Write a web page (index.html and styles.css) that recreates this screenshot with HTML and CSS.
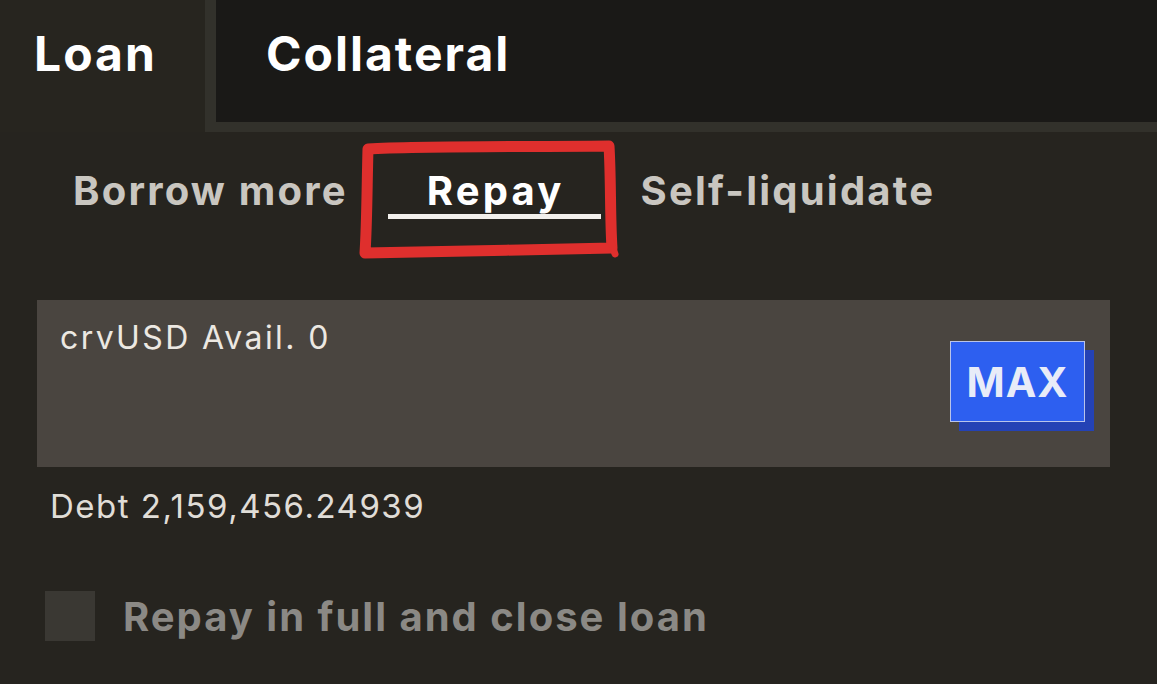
FILE: index.html
```html
<!DOCTYPE html>
<html lang="en">
<head>
<meta charset="utf-8">
<title>Loan – Repay</title>
<link rel="stylesheet" href="styles.css">
</head>
<body>
<div class="panel">
  <div class="tabs">
    <div class="tab tab-active">Loan</div>
    <div class="tab tab-idle">Collateral</div>
  </div>

  <div class="subtabs">
    <div class="subtab">Borrow more</div>
    <div class="subtab subtab-active">Repay</div>
    <div class="subtab">Self-liquidate</div>
    <svg class="annot" width="270" height="124" viewBox="0 0 270 124" aria-hidden="true">
      <path d="M9 11 C 60 8, 150 9, 250 8 C 252 40, 251 80, 253 110 C 170 112, 90 113, 6 115 C 8 85, 8 45, 9 11 Z" fill="none" stroke="#df2f2d" stroke-width="11" stroke-linejoin="round" stroke-linecap="round"/>
      <path d="M252 104 L 256 116" stroke="#df2f2d" stroke-width="7" stroke-linecap="round"/>
    </svg>
  </div>

  <div class="field">
    <div class="field-label">crvUSD Avail. 0</div>
    <button class="max">MAX</button>
  </div>

  <div class="debt">Debt 2,159,456.24939</div>

  <label class="check-row">
    <span class="checkbox"></span>
    <span class="check-label">Repay in full and close loan</span>
  </label>
</div>
</body>
</html>
```

FILE: styles.css
```css
html, body {
  margin: 0;
  padding: 0;
  background: #26241f;
  width: 1157px;
  height: 684px;
  overflow: hidden;
  font-family: Inter, "Liberation Sans", sans-serif;
}

.panel {
  display: flex;
  flex-direction: column;
  width: 1157px;
  height: 684px;
  background: #26241f;
}

.tabs {
  display: flex;
  height: 132px;
}

.tab {
  font-size: 48px;
  font-weight: 700;
  color: #ffffff;
  letter-spacing: 2px;
  box-sizing: border-box;
  padding-top: 24px;
}

.tab-active {
  width: 205px;
  padding-left: 34px;
  background: #27251f;
}

.tab-idle {
  flex: 1;
  background: #1a1917;
  border-left: 11px solid #32312b;
  border-bottom: 10px solid #32312b;
  padding-left: 50px;
}

.subtabs {
  position: relative;
  display: flex;
  align-items: flex-start;
  gap: 40px;
  padding-left: 73px;
  margin-top: 36px;
  height: 132px;
}

.subtab {
  font-size: 40px;
  font-weight: 700;
  color: #c9c6c0;
  line-height: 46px;
  letter-spacing: 2.2px;
}

.subtab-active {
  color: #ffffff;
  padding: 0 36px 0 39px;
  border-bottom: 5px solid #f2f0ec;
  height: 46px;
  letter-spacing: 3.2px;
}

.annot {
  position: absolute;
  left: 359px;
  top: -30px;
}

.field {
  display: flex;
  justify-content: space-between;
  align-items: flex-start;
  box-sizing: border-box;
  margin: 0 47px 0 37px;
  height: 167px;
  background: #4a4540;
  padding: 18px 25px 0 23px;
}

.field-label {
  font-size: 32px;
  color: #ece8e2;
  line-height: 40px;
  letter-spacing: 2.4px;
}

.max {
  margin-top: 23px;
  width: 135px;
  height: 81px;
  background: #2d5ff0;
  border: 1.5px solid #b9c4ea;
  box-shadow: 9px 9px 0 #2442b5;
  color: #e8ecf8;
  font-family: Inter, "Liberation Sans", sans-serif;
  font-size: 41px;
  font-weight: 700;
  letter-spacing: 1px;
  padding: 0;
}

.debt {
  font-size: 33px;
  color: #e0ddd7;
  margin: 17px 0 0 50px;
  line-height: 44px;
  letter-spacing: 1.5px;
}

.check-row {
  display: flex;
  align-items: center;
  gap: 28px;
  margin: 63px 0 0 45px;
}

.checkbox {
  width: 50px;
  height: 50px;
  background: #3a3833;
}

.check-label {
  font-size: 40px;
  font-weight: 700;
  color: #8b8985;
  letter-spacing: 2px;
}
```
